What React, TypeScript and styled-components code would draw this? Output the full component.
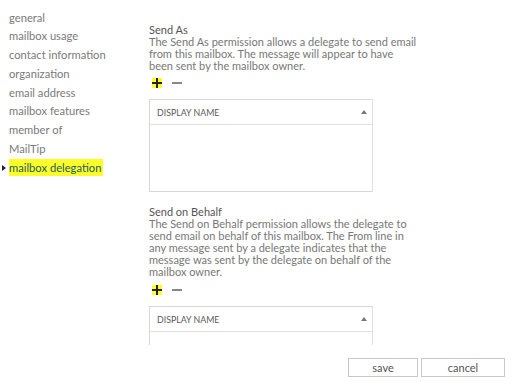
import React from "react";
import styled, { createGlobalStyle } from "styled-components";

const Global = createGlobalStyle`
  html, body { margin: 0; padding: 0; background: #fff; }
  body { width: 512px; height: 382px; overflow: hidden; font-family: Lato, "Noto Sans", sans-serif; }
`;

const Page = styled.div`
  display: flex;
  width: 512px;
  height: 382px;
  position: relative;
`;

const Nav = styled.nav`
  width: 149px;
  flex: none;
  padding-top: 8.5px;
  box-sizing: border-box;
  display: flex;
  flex-direction: column;
`;

const NavItem = styled.div<{ $active?: boolean }>`
  position: relative;
  padding-left: 9px;
  height: 18.75px;
  line-height: 18.75px;
  font-size: 11.2px;
  color: ${(p) => (p.$active ? "#1c5a5e" : "#7a7a7a")};
  white-space: nowrap;
`;

const Mark = styled.span`
  background: #ffff2a;
  padding: 2px 2px 2px 0;
`;

const Arrow = styled.span`
  position: absolute;
  left: 2px;
  top: 6.5px;
  width: 0;
  height: 0;
  border-top: 3px solid transparent;
  border-bottom: 3px solid transparent;
  border-left: 4px solid #222;
`;

const Main = styled.main`
  flex: 1;
  padding-top: 24px;
  display: flex;
  flex-direction: column;
`;

const Section = styled.section<{ $gap?: number }>`
  display: flex;
  flex-direction: column;
  width: 224px;
  margin-bottom: ${(p) => p.$gap ?? 0}px;
`;

const Title = styled.div`
  font-size: 11px;
  line-height: 12px;
  color: #555;
  white-space: nowrap;
`;

const Desc = styled.div`
  font-size: 11px;
  line-height: 12px;
  color: #777;
  white-space: nowrap;
`;

const Tools = styled.div<{ $offset: number }>`
  display: flex;
  align-items: center;
  gap: 10px;
  height: 10px;
  margin-top: ${(p) => p.$offset}px;
  padding-left: 3px;
`;

const PlusBtn = styled.span`
  display: inline-block;
  width: 10px;
  height: 10px;
  background: #ffff2a;
  position: relative;
  &::before, &::after {
    content: "";
    position: absolute;
    background: #222;
  }
  &::before { left: 0; right: 0; top: 4px; height: 2px; }
  &::after { top: 0; bottom: 0; left: 4px; width: 2px; }
`;

const MinusBtn = styled.span`
  display: inline-block;
  width: 10px;
  height: 2px;
  background: #888;
`;

const Table = styled.div<{ $height: number; $open?: boolean }>`
  margin-top: 11px;
  height: ${(p) => p.$height}px;
  border: 1px solid #d8d8d8;
  border-right-color: #e2e2e2;
  border-bottom: ${(p) => (p.$open ? "none" : "1px solid #d8d8d8")};
  box-sizing: border-box;
`;

const Header = styled.div`
  height: 24px;
  border-bottom: 1px solid #e0e0e0;
  display: flex;
  align-items: center;
  justify-content: space-between;
  padding: 0 5px 0 7px;
  font-size: 8.8px;
  color: #5a5a5a;
`;

const SortUp = styled.span`
  width: 0;
  height: 0;
  border-left: 3px solid transparent;
  border-right: 3px solid transparent;
  border-bottom: 4px solid #777;
`;

const Footer = styled.div`
  position: absolute;
  left: 348px;
  top: 358px;
  display: flex;
  gap: 3px;
`;

const Button = styled.button<{ $w: number }>`
  width: ${(p) => p.$w}px;
  height: 19px;
  border: 1px solid #c8c8c8;
  background: #fff;
  font-family: Lato, "Noto Sans", sans-serif;
  font-size: 11px;
  color: #555;
  padding: 0;
`;

const navItems = [
  "general",
  "mailbox usage",
  "contact information",
  "organization",
  "email address",
  "mailbox features",
  "member of",
  "MailTip",
];

export default function App() {
  return (
    <Page>
      <Global />
      <Nav>
        {navItems.map((n) => (
          <NavItem key={n}>{n}</NavItem>
        ))}
        <NavItem $active>
          <Arrow />
          <Mark>mailbox delegation</Mark>
        </NavItem>
      </Nav>
      <Main>
        <Section $gap={14}>
          <Title>Send As</Title>
          <Desc>
            The Send As permission allows a delegate to send email
            <br />
            from this mailbox. The message will appear to have
            <br />
            been sent by the mailbox owner.
          </Desc>
          <Tools $offset={6}>
            <PlusBtn />
            <MinusBtn />
          </Tools>
          <Table $height={93}>
            <Header>
              <span>DISPLAY NAME</span>
              <SortUp />
            </Header>
          </Table>
        </Section>
        <Section>
          <Title>Send on Behalf</Title>
          <Desc>
            The Send on Behalf permission allows the delegate to
            <br />
            send email on behalf of this mailbox. The From line in
            <br />
            any message sent by a delegate indicates that the
            <br />
            message was sent by the delegate on behalf of the
            <br />
            mailbox owner.
          </Desc>
          <Tools $offset={7}>
            <PlusBtn />
            <MinusBtn />
          </Tools>
          <Table $height={39} $open>
            <Header>
              <span>DISPLAY NAME</span>
              <SortUp />
            </Header>
          </Table>
        </Section>
      </Main>
      <Footer>
        <Button $w={70}>save</Button>
        <Button $w={84}>cancel</Button>
      </Footer>
    </Page>
  );
}
